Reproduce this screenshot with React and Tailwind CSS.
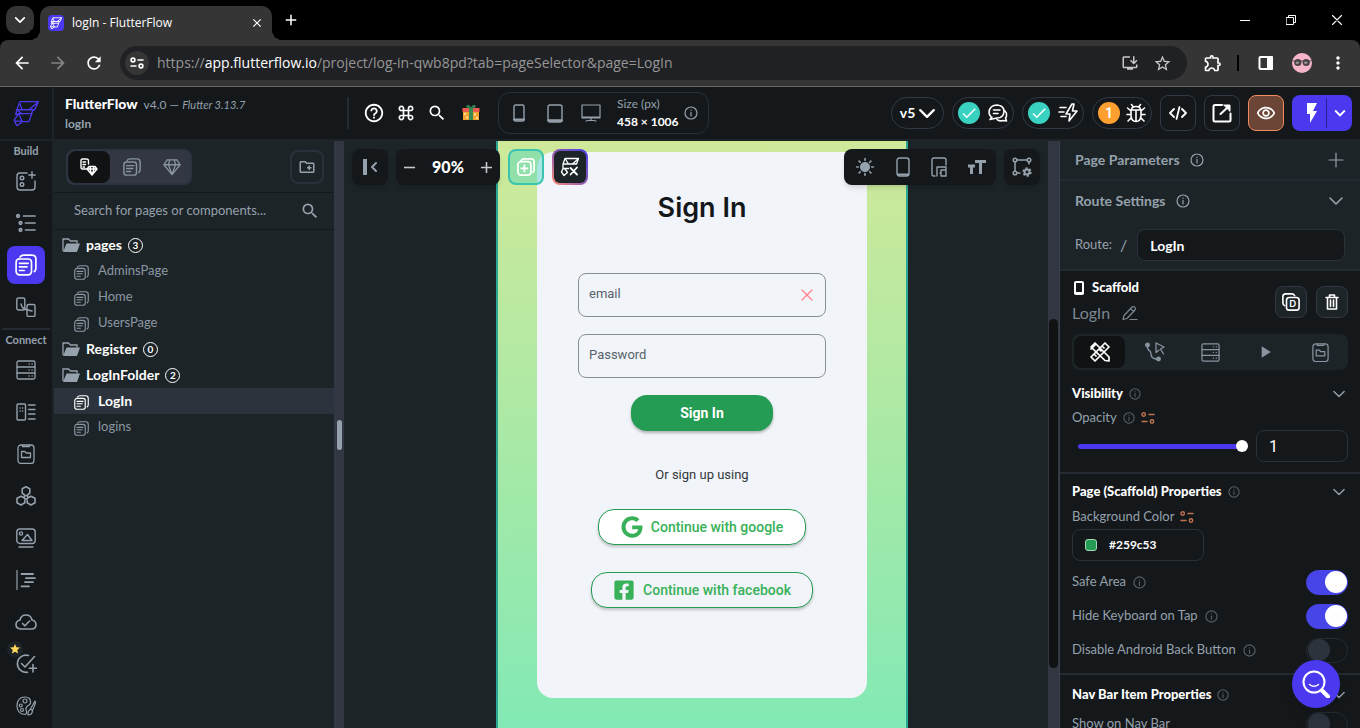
import React from "react";
import {
  MdArrowBack, MdArrowForward, MdRefresh, MdClose, MdAdd, MdRemove, MdInstallDesktop, MdStarBorder,
  MdOutlineExtension, MdMoreVert, MdSearch, MdKeyboardCommandKey, MdOutlineRemoveRedEye,
  MdFlashOn, MdKeyboardArrowDown, MdCheck, MdPlayArrow, MdStar, MdOutlineCreateNewFolder,
  MdHelpOutline, MdSunny,
} from "react-icons/md";
import { FaGoogle, FaFacebookSquare } from "react-icons/fa";

function Svg({ children, className = "size-5", box = "0 0 20 20", w = 1.4 }) {
  return (
    <svg viewBox={box} className={`shrink-0 ${className}`} fill="none" stroke="currentColor" strokeWidth={w} strokeLinecap="round" strokeLinejoin="round" aria-hidden="true">
      {children}
    </svg>
  );
}

const Logo = ({ className = "size-6", w = 1.2 }) => (
  <Svg className={className} box="0 0 24 24" w={w}>
    <path d="M6.500 1.500H23.500L20 9H3.500ZM6 3L8.500 9M22.500 2.500L14.500 9M3.500 9L2.500 13.500L5.500 12.500H17.500L14.500 20H8.500M18.500 9.500L17 12.500M4 9.500L8.500 13M5 13L1 18.500L3.500 24L8.500 20L5.500 13M1.500 19.500H8.500" />
  </Svg>
);

const Info = ({ className = "size-3" }) => (
  <Svg className={className} box="0 0 14 14" w={1.2}>
    <circle cx="7" cy="7" r="6" />
    <path d="M7 6.400V10M7 4V4.300" />
  </Svg>
);

const Chevron = ({ className = "w-3 h-2", w = 1.6 }) => (
  <Svg className={className} box="0 0 14 8" w={w}>
    <path d="M1 1L7 7L13 1" />
  </Svg>
);

const Pages = ({ className = "size-4", w = 1.3 }) => (
  <Svg className={className} w={w}>
    <rect x="1" y="4.500" width="14" height="14.500" rx="3" />
    <path d="M4.500 2.800Q5.500 1 8 1H15.500Q19 1 19 4.500V13Q19 15 17.500 16M4 8.500H12M4 11.700H11M4 15H8.500" />
  </Svg>
);

const Database = ({ className = "size-5", w = 1.3 }) => (
  <Svg className={className} w={w}>
    <rect x="1" y="1" width="18" height="18" rx="1.500" />
    <path d="M1 7H19M1 13H19M13 4H13.200M16 4H16.200M13 10H13.200M16 10H16.200M13 16H13.200M16 16H16.200" />
  </Svg>
);

const FolderClip = ({ className = "size-5" }) => (
  <Svg className={className} w={1.3}>
    <rect x="2" y="1" width="16" height="18.500" rx="3" />
    <path d="M6.500 1.500V2.500H13.500V1.500M5.500 7.500H9L10 9H14.500V13.500H5.500Z" />
  </Svg>
);

const Variable = () => (
  <Svg className="h-3 w-3.5 text-[#c2714f]" box="0 0 14 12" w={1.4}>
    <circle cx="2.700" cy="2.500" r="1.700" />
    <path d="M8 2.500H13M1 9.500H6" />
    <circle cx="11" cy="9.500" r="1.700" />
  </Svg>
);

const railBuild = [
  { name: "Widget palette", icon: <Svg><path d="M11 2H4Q1 2 1 5V16Q1 19 4 19H16Q19 19 19 16V10M16 0.800V7.200M12.800 4H19.200" /><circle cx="6" cy="7" r="1.800" /><circle cx="6" cy="13.500" r="1.800" /></Svg> },
  { name: "Widget tree", icon: <Svg w={1.7}><path d="M7.500 3H19M9.500 10H19M9.500 17H19" /><circle cx="2" cy="3" r="1.300" /><circle cx="4.500" cy="10" r="1.300" /><circle cx="4.500" cy="17" r="1.300" /></Svg> },
  { name: "Page selector", active: true, icon: <Pages className="size-[22px]" w={1.5} /> },
  { name: "Storyboard", icon: <Svg><rect x="0.800" y="1" width="8" height="12" rx="1.500" /><rect x="11" y="7.500" width="8" height="12" rx="1.500" /><path d="M5 7Q6 11.500 10 12.500T16 14" /></Svg> },
];

const railConnect = [
  { name: "Firestore", icon: <Database /> },
  { name: "Data types", icon: <Svg w={1.4}><rect x="1" y="2" width="8.500" height="16" rx="1" /><path d="M12.500 3H19M12.500 7.500H19M12.500 12H19M12.500 17H19M4 6H4.200M6.500 6H6.700M4 9H4.200M6.500 9H6.700" /></Svg> },
  { name: "App values", icon: <FolderClip /> },
  { name: "API calls", icon: <Svg w={1.6}><path d="M10 0.800L13.800 2.800V7.200L11.500 9M8.500 9L6.200 7.200V2.800L10 0.800M7.500 11.500L5 10.200L1 12.300V16.800L5 19L8.800 16.800V14.500M12.500 11.500L15 10.200L19 12.300V16.800L15 19L11.200 16.800V14.500" /><circle cx="10" cy="11.300" r="1.800" /></Svg> },
  { name: "Media assets", icon: <Svg><rect x="0.800" y="1" width="18.400" height="14.500" rx="3" /><circle cx="5" cy="5.500" r="1.600" /><path d="M6 12.500L11.500 6.500L16 12.500ZM3 19H17" /></Svg> },
  { name: "Custom code", icon: <Svg w={1.8}><path d="M1 0.500V19.500" strokeWidth="1.200" /><path d="M5.500 4H17M10 8.200H19M9 12.200H17M5.500 16.300H13" /></Svg> },
  { name: "Cloud functions", icon: <Svg className="h-5 w-[22px]" box="0 0 22 20" w={1.6}><path d="M5.500 17Q1 16.500 1 12.500Q1 9 5 8Q6 3 11 3Q16 3 17 8Q21 9 21 12.500Q21 17 16.500 17ZM7.500 11.500L10 13.800L14.500 9" /></Svg> },
  { name: "Tests", star: true, icon: <Svg className="size-[22px]" box="0 0 22 22" w={1.6}><path d="M13.500 2.500A8.600 8.600 0 1 0 12.500 19.200M6.500 10.500L10 14L19.500 3.500M18 11.500V19M14.300 15.300H21.700" /></Svg> },
  { name: "Theme settings", icon: <Svg w={1.2}><path d="M9 18.500Q1 18 1 9.500Q1.500 1 9 1Q15 1 14.500 7Q14 9 11.500 10Q9 12 10.500 15Q11 18 9 18.500M19 5L14.500 13L16.500 14.500L19.500 7ZM14 13.500Q11.500 15 12 19Q16 19 16.500 15" /><circle cx="9" cy="5" r="2" /><circle cx="4.800" cy="9.500" r="1.500" /><circle cx="6" cy="14" r="1.500" /></Svg> },
];

function RailItem({ item }) {
  return (
    <div className="flex h-[42px] items-center justify-center">
      <button aria-label={item.name} className={`relative flex size-[38px] items-center justify-center rounded-lg ${item.active ? "bg-[#4b39ef] text-white" : "text-[#95a1ac]"}`}>
        {item.icon}
        {item.star && <span className="absolute -top-1 left-0 flex size-4 items-center justify-center rounded-full bg-[#1d2428]"><MdStar className="size-3 text-[#ffd95a]" /></span>}
      </button>
    </div>
  );
}

function BrowserChrome() {
  return (
    <div className="shrink-0 bg-black font-['Open_Sans',sans-serif] text-white">
      <div className="flex h-10 items-end">
        <button aria-label="Search tabs" className="mb-1.5 ml-1.5 flex size-7 items-center justify-center self-end rounded-[10px] bg-[#353535]"><Chevron className="h-1.5 w-2.5" w={2.4} /></button>
        <div className="relative ml-1.5 flex h-[34px] w-[232px] items-center rounded-t-[10px] bg-[#353535] pr-2 pl-2">
          <span className="absolute bottom-0 -left-2.5 size-2.5 bg-[radial-gradient(circle_at_0_0,#000_10px,#353535_10px)]" />
          <span className="absolute -right-2.5 bottom-0 size-2.5 bg-[radial-gradient(circle_at_100%_0,#000_10px,#353535_10px)]" />
          <span className="flex size-4 items-center justify-center rounded-sm bg-[#4b39ef]"><Logo className="size-3" w={1.8} /></span>
          <span className="ml-2 flex-1 text-xs">logIn - FlutterFlow</span>
          <button aria-label="Close tab"><MdClose className="size-3.5" /></button>
        </div>
        <button aria-label="New tab" className="mb-[11px] ml-2.5"><MdAdd className="size-[18px]" /></button>
        <div className="ml-auto flex h-10 items-center">
          <button aria-label="Minimize" className="flex w-[46px] justify-center"><Svg className="size-2.5" box="0 0 10 10" w={1}><path d="M0 5.500H10" /></Svg></button>
          <button aria-label="Restore" className="flex w-[46px] justify-center"><Svg className="size-2.5" box="0 0 10 10" w={1}><path d="M0.500 2.500H7.500V9.500H0.500ZM2.500 2V0.500H9.500V7.500H8" /></Svg></button>
          <button aria-label="Close" className="flex w-[46px] justify-center"><Svg className="size-2.5" box="0 0 10 10" w={1.1}><path d="M0.500 0.500L9.500 9.500M9.500 0.500L0.500 9.500" /></Svg></button>
        </div>
      </div>
      <div className="flex h-[47px] items-center rounded-t-lg border-b border-[#666] bg-[#353535]">
        <button aria-label="Back" className="ml-3"><MdArrowBack className="size-5" /></button>
        <button aria-label="Forward" className="ml-4 text-[#858585]"><MdArrowForward className="size-5" /></button>
        <button aria-label="Reload" className="ml-4"><MdRefresh className="size-5" /></button>
        <div className="ml-4 flex h-[34px] flex-1 items-center rounded-full bg-[#202124] pr-[15px] pl-[5px]">
          <button aria-label="Site information" className="flex size-6 items-center justify-center rounded-full bg-[#353535]"><Svg className="h-3 w-3.5" box="0 0 14 12" w={1.600}><circle cx="3" cy="3" r="1.900" /><path d="M8 3H13M1 9H6" /><circle cx="11" cy="9" r="1.900" /></Svg></button>
          <div className="ml-2 flex-1 text-sm whitespace-nowrap text-[#969696]">https://<span className="text-white">app.flutterflow.io</span>/project/log-in-qwb8pd?tab=pageSelector&amp;page=LogIn</div>
          <button aria-label="Install app" className="text-[#c7c7c7]"><MdInstallDesktop className="size-[18px]" /></button>
          <button aria-label="Bookmark" className="ml-3.5 text-[#c7c7c7]"><MdStarBorder className="size-[19px]" /></button>
        </div>
        <button aria-label="Extensions" className="ml-4"><MdOutlineExtension className="size-5" /></button>
        <span className="ml-3.5 h-4 w-0.5 bg-black" />
        <button aria-label="Side panel" className="ml-[19px]"><Svg className="h-3.5 w-4" box="0 0 16 14" w={2}><rect x="1.500" y="1" width="12.500" height="12" rx="1" /><path d="M10 1H14V13H10Z" fill="currentColor" /></Svg></button>
        <button aria-label="Profile" className="ml-[18px]">
          <svg viewBox="0 0 20 20" className="size-5"><circle cx="10" cy="10" r="10" fill="#f6b5c8" /><circle cx="5.800" cy="9.500" r="3.600" fill="#4b4345" /><circle cx="14.200" cy="9.500" r="3.600" fill="#4b4345" /><circle cx="5.400" cy="9.500" r="1.600" fill="#9a9294" /><circle cx="13.800" cy="9.500" r="1.600" fill="#9a9294" /><path d="M1 8H19" stroke="#4b4345" /></svg>
        </button>
        <button aria-label="Menu" className="mr-3 ml-4"><MdMoreVert className="size-5" /></button>
      </div>
    </div>
  );
}

const pill = "flex h-8 items-center justify-center rounded-full border border-[#323743]";
const square = "flex size-9 items-center justify-center rounded-lg border";
const badge = "flex size-[22px] items-center justify-center rounded-full";

function Header() {
  return (
    <header className="flex h-[54px] shrink-0 items-center border-b-2 border-[#1d2428] bg-[#14181b] text-white">
      <div className="flex h-full w-[54px] shrink-0 items-center justify-center border-r-2 border-[#1d2428] text-[#4b39ef]"><Logo className="size-[26px]" /></div>
      <div className="ml-[11px] w-[282px] pt-0.5 leading-5">
        <div className="flex items-baseline leading-[18px]"><span className="text-sm font-black">FlutterFlow</span><span className="ml-1.5 text-xs text-[#95a1ac]">v4.0 — <em className="text-[11px]">Flutter 3.13.7</em></span></div>
        <div className="text-xs leading-5 font-bold text-[#95a1ac]">logIn</div>
      </div>
      <span className="h-8 w-0.5 bg-[#252b33]" />
      <div className="ml-3.5 flex items-center gap-[11px]">
        <button aria-label="Help"><MdHelpOutline className="size-[22px]" /></button>
        <button aria-label="Shortcuts"><MdKeyboardCommandKey className="size-5" /></button>
        <button aria-label="Search"><MdSearch className="size-5" /></button>
        <button aria-label="What's new" className="ml-1">
          <svg viewBox="0 0 18 18" className="size-[18px]"><path d="M1 7H17V16H1Z" fill="#f6a531" /><path d="M0.500 4H17.500V8H0.500Z" fill="#ee5a4e" /><path d="M7 4H11V16H7Z" fill="#378b56" /><path d="M9 4Q3 4 5 1.500Q7 0 9 4Q11 0 13 1.500Q15 4 9 4" fill="#378b56" stroke="#2d7549" /><g fill="#fff3c4"><circle cx="3" cy="10" r="1" /><circle cx="5" cy="13.500" r="1" /><circle cx="13" cy="10.500" r="1" /><circle cx="15" cy="14" r="1" /></g></svg>
        </button>
      </div>
      <div className="ml-[18px] flex h-[42px] w-[211px] items-center rounded-xl border border-[#2a3038] pl-2.5 text-[#95a1ac]">
        <button aria-label="Phone size" className="flex w-5 justify-center"><Svg className="h-[18px] w-3" box="0 0 12 18"><rect x="1" y="1" width="10" height="16" rx="1.500" /><path d="M1 15.500H11" strokeWidth="2.200" /></Svg></button>
        <button aria-label="Tablet size" className="ml-4 flex w-5 justify-center"><Svg className="h-[19px] w-4" box="0 0 16 19"><rect x="1" y="1" width="14" height="17" rx="2" /><path d="M1.500 16.500H14.500" strokeWidth="2.500" /></Svg></button>
        <button aria-label="Desktop size" className="ml-4 flex w-5 justify-center"><Svg className="h-[18px] w-5" box="0 0 20 18" w={1.200}><path d="M1 1H19V13H1ZM1 14H19M10 14V16.500M5 17Q10 15.500 15 17" /></Svg></button>
        <div className="ml-4 leading-[18px]">
          <div className="text-xs leading-[18px]">Size (px)</div>
          <div className="text-xs leading-[18px] font-bold text-white">458 × 1006</div>
        </div>
        <span className="ml-auto mr-2.5"><Info className="size-3.5" /></span>
      </div>
      <div className="ml-auto flex items-center gap-2 pr-2">
        <button className={`${pill} w-[53px] gap-1 text-sm font-bold`}>v5 <Chevron className="h-[9px] w-4" w={2} /></button>
        <button aria-label="Comments" className={`${pill} w-[62px] gap-2`}>
          <span className={`${badge} bg-[#39d2c0]`}><MdCheck className="size-[18px]" /></span>
          <Svg className="size-5" w={1.600}><path d="M3 14Q1 12 1 9Q2 2 9 2Q16 2.500 16 8.500Q15.500 15 9 15L2 16.500L4 14M5.500 7H12M5.500 10.500H10M17 8Q19 10 18.500 12.500Q18.500 14 17.500 15L18.500 18L15 17.500Q11 18.500 9 16.500" /></Svg>
        </button>
        <button aria-label="Optimizations" className={`${pill} w-[62px] gap-2`}>
          <span className={`${badge} bg-[#39d2c0]`}><MdCheck className="size-[18px]" /></span>
          <Svg className="size-5" w={1.600}><path d="M14 1L8 11H12L11 18L19 8H14.500L16 1ZM2 4.500H8M1 9H6M3 13.500H8" /></Svg>
        </button>
        <button aria-label="Issues" className={`${pill} w-[60px] gap-1.5`}>
          <span className={`${badge} bg-[#ff9f2f] font-['Roboto'] text-sm font-bold`}>1</span>
          <Svg className="size-5" w={1.600}><path d="M5.500 7Q5.500 3.500 10 3.500Q14.500 3.500 14.500 7M5 7H15V13Q14.500 18.500 10 18.500Q5.500 18.500 5 13ZM10 7V18M7 3.500L5.500 1.500M13 3.500L14.500 1.500M1.500 5L5 8M18.500 5L15 8M1 11.500H5M15 11.500H19M2 18L5.500 14.500M18 18L14.500 14.500" /></Svg>
        </button>
        <button aria-label="View code" className={`${square} border-[#323743]`}><Svg className="h-4 w-[18px]" box="0 0 18 16" w={1.800}><path d="M5 4L1 8L5 12M13 4L17 8L13 12M10.500 2L7.500 14" /></Svg></button>
        <button aria-label="Open in new window" className={`${square} border-[#323743]`}><Svg className="size-5" w={2}><path d="M10 2H3Q1.500 2 1.500 3.500V17Q1.500 18.500 3 18.500H17Q18.500 18.500 18.500 17V10.500M8.500 11L16 4" /><path d="M12 2H18V8Z" fill="currentColor" strokeWidth="1" /></Svg></button>
        <button aria-label="Preview" className={`${square} border-[#f08b62] bg-[#6b4637]`}><MdOutlineRemoveRedEye className="size-5" /></button>
        <div className="flex h-9 w-[60px] items-center rounded-lg bg-[#4b39ef]">
          <button aria-label="Run" className="ml-2"><MdFlashOn className="size-6" /></button>
          <span className="ml-0.5 h-[30px] w-px bg-[#2a2093]" />
          <button aria-label="Run options" className="ml-0.5"><MdKeyboardArrowDown className="size-[22px]" /></button>
        </div>
      </div>
    </header>
  );
}

const tree = [
  { folder: true, label: "pages", count: 3 },
  { label: "AdminsPage" },
  { label: "Home" },
  { label: "UsersPage" },
  { folder: true, label: "Register", count: 0 },
  { folder: true, label: "LogInFolder", count: 2 },
  { label: "LogIn", selected: true },
  { label: "logins" },
];

function TreeRow({ item }) {
  if (item.folder) {
    return (
      <li className="flex h-[26px] items-center pl-2 text-sm font-bold text-white">
        <svg viewBox="0 0 18 16" className="h-4 w-[18px] text-[#95a1ac]" aria-hidden="true"><path d="M1 14V2H6.500L8.500 4H15V6.500" fill="none" stroke="currentColor" strokeWidth="1.300" /><path d="M4.500 6.500H18L15 15H1Z" fill="currentColor" /></svg>
        <span className="ml-1.5">{item.label}</span>
        <span className="ml-1.5 flex size-[15px] items-center justify-center rounded-full border border-white text-[10px] leading-none">{item.count}</span>
      </li>
    );
  }
  return (
    <li className={`flex h-[26px] items-center pl-5 ${item.selected ? "bg-[#2d333d] text-sm font-bold text-white" : "text-[13px] text-[#8b97a2]"}`}>
      <Pages className="mt-0.5 size-[15px]" w={1.5} />
      <span className="ml-[9px]">{item.label}</span>
    </li>
  );
}

function LeftPanel() {
  return (
    <section className="flex w-[280px] shrink-0 flex-col bg-[#1d2428] text-[#95a1ac]">
      <div className="flex h-[52px] items-center justify-between border-b border-[#14181b] pr-2.5 pl-3">
        <div className="flex h-9 w-[126px] items-center rounded-lg border-2 border-[#2d3441] bg-[#323743] text-[#8894a0]">
          <button aria-label="Pages and components" className="flex h-full w-[42px] items-center justify-center rounded-lg bg-[#101213] text-white">
            <Svg className="size-5"><path d="M8 12H3.500Q2 12 2 10.500V3.500Q2 2 3.500 2H7.500Q9.500 2 9.500 4V7M4 5H6.500M4 7.500H6.500M4 10H5.500M10 9.500H16L18 12L13 18L8 12ZM8 12H18M11.500 10L11 12L13 18M14.500 10L15 12L13 18" /></Svg>
          </button>
          <button aria-label="Pages" className="flex flex-1 justify-center pl-1"><Pages className="size-[18px]" w={1.6} /></button>
          <button aria-label="Components" className="flex flex-1 justify-center pl-1"><Svg className="size-[18px]" w={1.400}><path d="M4.500 2H15.500L19 7.500L10 18.500L1 7.500ZM1 7.500H19M7.500 2L6 7.500L10 18L14 7.500L12.500 2" /></Svg></button>
        </div>
        <button aria-label="Create folder" className="flex size-[34px] items-center justify-center rounded-lg border-2 border-[#2b313b]"><MdOutlineCreateNewFolder className="size-[18px]" /></button>
      </div>
      <div className="flex h-[37px] items-center border-b border-[#14181b] pr-3.5 pl-5">
        <input aria-label="Search for pages or components" placeholder="Search for pages or components..." className="min-w-0 flex-1 text-[13px] outline-none placeholder:text-[#95a1ac]" />
        <MdSearch className="size-5" />
      </div>
      <ul className="mt-0.5">{tree.map((t) => <TreeRow key={t.label} item={t} />)}</ul>
    </section>
  );
}

const floating = "flex h-9 items-center rounded-lg bg-[#14181b] shadow-md";
const social = "flex h-9 items-center justify-center gap-2 rounded-2xl border border-[#259c53] text-sm font-medium text-[#38b158] shadow-[0_2px_3px_#0003]";

function Canvas() {
  return (
    <main className="relative min-w-0 flex-1 overflow-hidden bg-[#1d2428] pl-3">
      <div className="mx-auto flex h-[906px] w-[412px] flex-col items-center border-x-2 border-[#2ba796] bg-linear-to-b from-[#cfe999] from-0% via-[#a0e9a9] via-40% to-[#7be9b8] to-70% pt-[11px] font-['Roboto',sans-serif]">
        <div className="flex h-[546px] w-[330px] shrink-0 flex-col items-center rounded-2xl bg-[#f1f4f8] pt-9 text-[#14181b]">
          <h1 className="font-['Inter'] text-[27px] leading-10 font-semibold">Sign In</h1>
          <div className="mt-[45px] flex h-11 w-[248px] items-center rounded-lg border border-[#8a8f94] pr-3 pl-2.5">
            <input aria-label="email" placeholder="email" className="min-w-0 flex-1 pb-0.5 text-[13px] outline-none placeholder:text-[#57636c]" />
            <button aria-label="Clear"><Svg className="size-3" box="0 0 12 12" w={1.200}><path d="M1 1L11 11M11 1L1 11" stroke="#ff8088" /></Svg></button>
          </div>
          <div className="mt-[17px] flex h-11 w-[248px] items-center rounded-lg border border-[#8a8f94] px-2.5">
            <input type="password" aria-label="Password" placeholder="Password" className="min-w-0 flex-1 pb-0.5 text-[13px] outline-none placeholder:text-[#57636c]" />
          </div>
          <button className="mt-[17px] h-9 w-[142px] rounded-2xl bg-[#259c53] text-sm font-bold text-white shadow-[0_2px_3px_#0004]">Sign In</button>
          <p className="mt-[34px] text-[13px] leading-5 text-[#33383c]">Or sign up using</p>
          <button className={`${social} mt-6 w-[208px] bg-white`}><FaGoogle className="size-[22px]" />Continue with google</button>
          <button className={`${social} mt-[27px] w-[222px] bg-[#f1f4f8]`}><FaFacebookSquare className="size-[22px]" />Continue with facebook</button>
        </div>
      </div>

      <div className="absolute inset-x-2 top-2 flex justify-between text-[#95a1ac]">
        <div className="flex gap-2">
          <button aria-label="Collapse panel" className={`${floating} w-9 justify-center gap-1`}><span className="h-4 w-1 bg-current" /><Svg className="h-2.5 w-1.5" box="0 0 6 10" w={2}><path d="M5 1L1 5L5 9" /></Svg></button>
          <div className={`${floating} w-[104px] justify-between px-1`}>
            <button aria-label="Zoom out" className="text-[#c6c9cc]"><MdRemove className="size-[19px]" /></button>
            <span className="text-base font-black text-white">90%</span>
            <button aria-label="Zoom in" className="text-[#c6c9cc]"><MdAdd className="size-[19px]" /></button>
          </div>
          <button aria-label="Add widget" className="flex size-9 items-center justify-center rounded-lg border-2 border-[#39c4b0] bg-[#39d2c0]/40 text-white"><Svg className="size-[18px]" w={1.900}><rect x="1" y="4" width="14.500" height="15" rx="3.500" /><path d="M4.500 3Q5.500 1 8 1H15.500Q19 1 19 4.500V13Q19 15 17.500 16M8.200 8V15M4.700 11.500H11.700" /></Svg></button>
          <button aria-label="AI builder" className="size-9 rounded-lg bg-linear-to-tr from-[#ff8b68] via-[#8a55b0] to-[#4b39ef] p-0.5 text-white"><span className="flex size-full items-center justify-center rounded-md bg-[#1d2428]"><Svg className="size-5" w={1.300}><path d="M5 1.500H18.500L16.500 7H3ZM5 1.500L8.500 7M18 2L12.500 7M3 7V11.500H8.500M3 11.500L1.500 15L4 18.500L7.500 15.500L5 12" /><path d="M10.500 11L17 17.500M17 10.500L10.500 17.500" strokeWidth="1.800" /></Svg></span></button>
        </div>
        <div className="flex gap-2">
          <div className={`${floating} w-[152px] justify-around`}>
            <button aria-label="Light mode"><MdSunny className="size-5" /></button>
            <button aria-label="Device frame"><Svg className="h-5 w-3.5" box="0 0 14 20"><rect x="1" y="1" width="12" height="18" rx="2.500" /><path d="M2 17.500H12" strokeWidth="2" /></Svg></button>
            <button aria-label="Multi device"><Svg className="h-5 w-4" box="0 0 16 20"><path d="M4 19H3Q1 19 1 17V3Q1 1 3 1H13Q15 1 15 3V8M6 19V10H15V12M10 13H15V19H10ZM10 16H9" /></Svg></button>
            <button aria-label="Text scale"><Svg className="h-4 w-[18px]" box="0 0 18 16" w={3}><g strokeLinecap="butt"><path d="M7 2.500H18M12.500 2.500V15M0 7H7M3.500 7V15" /></g></Svg></button>
          </div>
          <button aria-label="Canvas settings" className={`${floating} w-9 justify-center`}><Svg className="size-5" w={1.500}><circle cx="3" cy="3" r="1.800" /><circle cx="17" cy="3" r="1.800" /><circle cx="3" cy="16" r="1.800" /><path d="M5 3H15M3 5V14M17 5V7M5 16H8" /><circle cx="15" cy="15" r="3.600" strokeWidth="2.200" strokeDasharray="2 1.770" strokeLinecap="butt" /><circle cx="15" cy="15" r="2.400" strokeWidth="2" /></Svg></button>
        </div>
      </div>
    </main>
  );
}

function Toggle({ id, on }) {
  return <input id={id} type="checkbox" role="switch" defaultChecked={on} className="h-[25px] w-[42px] shrink-0 appearance-none rounded-full border border-[#252b33] before:block before:size-[22px] before:translate-x-px before:rounded-full before:bg-[#2d333d] checked:border-[#4744e8] checked:bg-[#4744e8] checked:before:translate-x-[18px] checked:before:bg-white" />;
}

function ToggleRow({ id, label, on, info = true }) {
  return (
    <div className="flex h-[34px] items-center">
      <label htmlFor={id}>{label}</label>
      {info && <span className="ml-[7px] text-[#57636c]"><Info className="size-[13px]" /></span>}
      <span className="ml-auto flex"><Toggle id={id} on={on} /></span>
    </div>
  );
}

function SectionTitle({ children }) {
  return (
    <div className="flex h-[25px] items-center">
      <h2 className="font-black text-white">{children}</h2>
      <span className="ml-1.5 text-[#57636c]"><Info /></span>
      <button aria-label="Toggle section" className="mr-[3px] ml-auto"><Chevron /></button>
    </div>
  );
}

const propertyTabs = [
  { name: "Properties", icon: <Svg w={1.700}><path d="M1 5L5 1L19 15L19 19L15 18.500ZM6 2L1 7M15 1L19 5L5 19L1 15ZM12 4L14 6M9 7L11 9M6 10L8 12M4 12L6 14" /></Svg> },
  { name: "Actions", icon: <Svg w={1.300}><circle cx="2.500" cy="3" r="1.800" fill="currentColor" /><circle cx="13.500" cy="17" r="1.800" fill="currentColor" /><path d="M2.500 5Q2.500 8 5 9Q6 10 6 13Q7 17 12 17M11 1L19 5L15.500 7L18.500 12M11 1V10.500L14 8" /></Svg> },
  { name: "Backend query", icon: <Database className="size-[19px]" /> },
  { name: "Animations", icon: <MdPlayArrow className="size-5" /> },
  { name: "State", icon: <FolderClip className="size-[19px]" /> },
];

function RightPanel() {
  return (
    <aside className="w-[300px] shrink-0 overflow-hidden bg-[#14181b] text-[13px] text-[#95a1ac]">
      <div className="border-b-2 border-[#252b33] bg-[#1d2428]">
        <div className="flex h-10 items-center border-b-2 border-[#252b33] pr-4 pl-[15px]">
          <h2 className="text-sm font-bold">Page Parameters</h2><span className="ml-2.5"><Info className="size-3.5" /></span>
          <button aria-label="Add parameter" className="ml-auto"><Svg className="size-4" box="0 0 16 16" w={1.200}><path d="M8 1V15M1 8H15" /></Svg></button>
        </div>
        <div className="flex h-10 items-center pr-[17px] pl-[15px]">
          <h2 className="text-sm font-bold">Route Settings</h2><span className="ml-2.5"><Info className="size-3.5" /></span>
          <button aria-label="Toggle route settings" className="ml-auto"><Chevron className="h-2 w-3.5" /></button>
        </div>
        <div className="flex h-12 items-center pr-[15px] pl-[15px]">
          <label htmlFor="route">Route:</label><span className="ml-2 text-base">/</span>
          <input id="route" defaultValue="LogIn" className="ml-2.5 h-8 min-w-0 flex-1 rounded-lg border border-[#2b313b] bg-[#14181b] px-3 text-sm font-bold text-white outline-none" />
        </div>
      </div>
      <div className="px-3 pt-1.5">
        <div className="flex">
          <div>
            <div className="flex h-[22px] items-center font-black text-white"><Svg className="ml-0.5 h-3.5 w-2.5" box="0 0 10 14" w={2}><rect x="1" y="1" width="8" height="12" rx="1" /><path d="M1 12H9" /></Svg><span className="ml-2">Scaffold</span></div>
            <div className="flex h-[28px] items-center text-base text-[#7b8791]">LogIn<Svg className="ml-3 size-4" box="0 0 16 16" w={1.200}><path d="M1 14.500L2 10.500L10 2Q11.500 1 13 2.500Q14 4 13 5L5 13.500ZM8.500 3.500L11.500 6.500M8 14.500H15" /></Svg></div>
          </div>
          <div className="ml-auto flex gap-[9px] pt-[9px] text-white">
            <button aria-label="Duplicate" className="flex size-8 items-center justify-center rounded-lg border border-[#323743] bg-[#1d2428]"><Svg className="size-[18px]" w={1.800}><rect x="5" y="5" width="14" height="14" rx="3" /><path d="M3 14Q1 13 1 11V4Q1 1 4 1H11Q13 1 14 3" /><text x="12" y="15.500" textAnchor="middle" fontSize="10" fontWeight="700" fill="currentColor" stroke="none">D</text></Svg></button>
            <button aria-label="Delete" className="flex size-8 items-center justify-center rounded-lg border border-[#323743] bg-[#1d2428]"><Svg className="h-4 w-3.5" box="0 0 14 16" w={1.600}><path d="M1 3.500H13M4.500 3V1H9.500V3M2.500 4V15H11.500V4M5.500 6V12.500M8.500 6V12.500" /></Svg></button>
          </div>
        </div>
        <div className="mt-[7px] flex h-9 gap-1 rounded-lg bg-[#1d2428] p-0.5 text-[#8894a0]">
          {propertyTabs.map((t, i) => (
            <button key={t.name} aria-label={t.name} className={`flex flex-1 items-center justify-center rounded-lg ${i === 0 ? "bg-[#101213] text-white" : ""}`}>{t.icon}</button>
          ))}
        </div>
      </div>
      <div className="border-b-2 border-[#252b33] px-3 pt-[11px] pb-2.5">
        <SectionTitle>Visibility</SectionTitle>
        <div className="flex h-6 items-center"><label htmlFor="opacity">Opacity</label><span className="mr-1.5 ml-1.5 text-[#57636c]"><Info /></span><Variable /></div>
        <div className="flex h-8 items-center pl-1.5">
          <input id="opacity" type="range" min="0" max="1" step="0.01" defaultValue="1" className="h-[5px] min-w-0 flex-1 appearance-none rounded-full bg-[#4b39ef] [&::-webkit-slider-thumb]:size-3 [&::-webkit-slider-thumb]:appearance-none [&::-webkit-slider-thumb]:rounded-full [&::-webkit-slider-thumb]:bg-white" />
          <input aria-label="Opacity value" defaultValue="1" className="ml-2 h-8 w-[92px] rounded-lg border border-[#2b313b] px-3 font-['Roboto'] text-base text-white outline-none" />
        </div>
      </div>
      <div className="border-b-2 border-[#252b33] px-3 pt-[5px] pb-1.5">
        <SectionTitle>Page (Scaffold) Properties</SectionTitle>
        <div className="flex h-[25px] items-center"><span>Background Color</span><span className="ml-1.5"><Variable /></span></div>
        <button className="mb-1 flex h-8 w-[132px] items-center rounded-lg border border-[#2b313b] text-xs font-bold text-white"><span className="mr-3 ml-3 size-3 rounded-[3px] border border-[#a5d8b8] bg-[#259c53]" />#259c53</button>
        <ToggleRow id="safe" label="Safe Area" on />
        <ToggleRow id="keyboard" label="Hide Keyboard on Tap" on />
        <ToggleRow id="back" label="Disable Android Back Button" />
      </div>
      <div className="px-3 pt-[7px]">
        <SectionTitle>Nav Bar Item Properties</SectionTitle>
        <ToggleRow id="navbar" label="Show on Nav Bar" info={false} />
      </div>
    </aside>
  );
}

export default function App() {
  return (
    <div className="flex h-screen flex-col overflow-hidden bg-[#14181b] font-['Lato',sans-serif]">
      <BrowserChrome />
      <Header />
      <div className="flex min-h-0 flex-1">
        <nav className="w-[54px] shrink-0 overflow-hidden border-r-2 border-[#1d2428] bg-[#14181b] text-center text-[11px] font-bold text-[#95a1ac]">
          <div className="flex h-[19px] items-center justify-center pt-0.5">Build</div>
          {railBuild.map((r) => <RailItem key={r.name} item={r} />)}
          <div className="mx-0.5 h-0.5 bg-[#252b33]" />
          <div className="flex h-[19px] items-center justify-center pt-0.5">Connect</div>
          {railConnect.map((r) => <RailItem key={r.name} item={r} />)}
        </nav>
        <LeftPanel />
        <div className="flex w-2.5 shrink-0 items-center justify-center bg-[#323743]"><span className="h-[30px] w-[5px] rounded-full bg-[#95a1ac]" /></div>
        <Canvas />
        <div className="flex w-3 shrink-0 flex-col border-r border-[#3a414c] bg-[#323743] px-px pt-[178px]"><span className="h-[349px] rounded-full bg-[#101213]" /></div>
        <RightPanel />
      </div>
      <button aria-label="Help center" className="fixed right-5 bottom-5 flex size-12 items-center justify-center rounded-full bg-[#4b39ef] text-white shadow-lg">
        <Svg className="size-7" box="0 0 28 28" w={2}><circle cx="12" cy="12" r="10.500" /><path d="M7.500 14.500Q12 18 16.500 14.500" strokeWidth="1.500" /><path d="M20 20.500L26 26.500" strokeWidth="4" /></Svg>
      </button>
    </div>
  );
}
